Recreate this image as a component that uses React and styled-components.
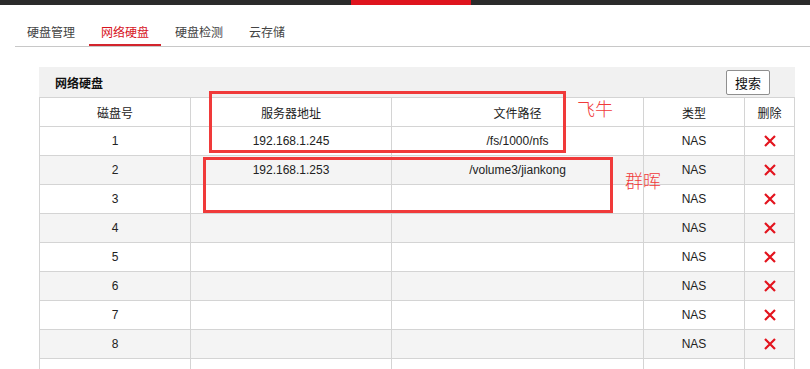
import React from 'react';
import styled, {createGlobalStyle} from 'styled-components';

const GlobalStyle = createGlobalStyle`
    html, body {
        margin: 0;
        padding: 0;
        background: #fff;
        font-family: "Liberation Sans", "Noto Sans CJK SC", sans-serif;
        color: #222;
    }
    * { box-sizing: border-box; }
`;

const Page = styled.div`
    position: relative;
    width: 810px;
    height: 369px;
    overflow: hidden;
`;

const TopBar = styled.div`
    height: 5px;
    background: #2b2b2b;
    padding-left: 351px;
`;

const TopBarActive = styled.div`
    width: 120px;
    height: 100%;
    background: #df141e;
`;

const Tabs = styled.div`
    display: flex;
    gap: 2px;
    margin: 17px 0 0 15px;
    border-bottom: 1px solid #c8c8c8;
`;

const Tab = styled.div`
    padding: 0 12px;
    height: 24px;
    line-height: 20px;
    font-size: 12px;
    font-family: "Noto Sans CJK SC", sans-serif;
    color: ${p => (p.active ? '#d7141e' : '#444')};
    border-bottom: 2px solid ${p => (p.active ? '#d3242c' : 'transparent')};
`;

const Panel = styled.div`
    margin: 20px 0 0 39px;
    width: 756px;
`;

const PanelHeader = styled.div`
    display: flex;
    align-items: center;
    justify-content: space-between;
    height: 31px;
    padding: 0 25px 0 16px;
    background: #f1f1f1;
    border-bottom: 1px solid #d4d4d4;
`;

const PanelTitle = styled.div`
    font-family: "Noto Sans CJK SC", sans-serif;
    font-weight: bold;
    font-size: 12px;
    color: #111;
`;

const SearchButton = styled.button`
    width: 44px;
    height: 25px;
    margin-top: 1px;
    padding: 0;
    background: #fff;
    border: 1px solid #8f8f8f;
    border-radius: 2px;
    font-family: "Noto Sans CJK SC", sans-serif;
    font-size: 13px;
    color: #111;
`;

const Row = styled.div`
    display: grid;
    grid-template-columns: 151px 201px 252px 101px 50px;
    height: 29px;
    border-left: 1px solid #d4d4d4;
    border-bottom: 1px solid #d4d4d4;
    background: ${p => (p.shaded ? '#f4f4f4' : '#fff')};
`;

const Cell = styled.div`
    display: flex;
    align-items: center;
    justify-content: center;
    border-right: 1px solid #d4d4d4;
    font-size: 12px;
    font-family: ${p => (p.cjk ? '"Noto Sans CJK SC", sans-serif' : '"Liberation Sans", "Noto Sans CJK SC", sans-serif')};
    color: #222;
`;

const Mark = styled.div`
    position: absolute;
    border: 3px solid #f03a3a;
`;

const Note = styled.div`
    position: absolute;
    font-family: "Noto Sans CJK SC", sans-serif;
    font-weight: 300;
    font-size: 18px;
    color: #f03a3a;
`;

const DeleteIcon = () => (
    <svg width="12" height="12" viewBox="0 0 12 12">
        <path d="M1 1 L11 11 M11 1 L1 11" stroke="#e3141e" strokeWidth="2.2" />
    </svg>
);

const rows = [
    {id: 1, ip: '192.168.1.245', path: '/fs/1000/nfs'},
    {id: 2, ip: '192.168.1.253', path: '/volume3/jiankong'},
    {id: 3}, {id: 4}, {id: 5}, {id: 6}, {id: 7}, {id: 8}
];

export default function App() {
    return (
        <Page>
            <GlobalStyle/>
            <TopBar><TopBarActive/></TopBar>
            <Tabs>
                <Tab>硬盘管理</Tab>
                <Tab active>网络硬盘</Tab>
                <Tab>硬盘检测</Tab>
                <Tab>云存储</Tab>
            </Tabs>
            <Panel>
                <PanelHeader>
                    <PanelTitle>网络硬盘</PanelTitle>
                    <SearchButton>搜索</SearchButton>
                </PanelHeader>
                <Row>
                    <Cell cjk>磁盘号</Cell>
                    <Cell cjk>服务器地址</Cell>
                    <Cell cjk>文件路径</Cell>
                    <Cell cjk>类型</Cell>
                    <Cell cjk>删除</Cell>
                </Row>
                {rows.map((r, i) => (
                    <Row key={r.id} shaded={i % 2 === 1}>
                        <Cell>{r.id}</Cell>
                        <Cell>{r.ip}</Cell>
                        <Cell>{r.path}</Cell>
                        <Cell>NAS</Cell>
                        <Cell><DeleteIcon/></Cell>
                    </Row>
                ))}
                <Row>
                    <Cell/><Cell/><Cell/><Cell/><Cell/>
                </Row>
            </Panel>
            <Mark style={{left: 209, top: 91, width: 357, height: 62}}/>
            <Mark style={{left: 203, top: 157, width: 410, height: 56}}/>
            <Note style={{left: 577, top: 95}}>飞牛</Note>
            <Note style={{left: 625, top: 167}}>群晖</Note>
        </Page>
    );
}
